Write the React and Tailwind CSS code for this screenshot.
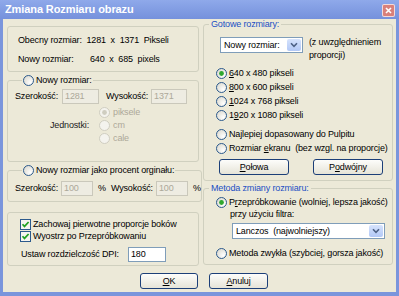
import React from "react";

function Radio({ checked, disabled }) {
  return (
    <svg width="11" height="11" viewBox="0 0 11 11" className="shrink-0">
      <defs>
        <radialGradient id="rg" cx="0.7" cy="0.7" r="0.8">
          <stop offset="0" stopColor="#ffffff" />
          <stop offset="1" stopColor="#dcdad0" />
        </radialGradient>
      </defs>
      <circle
        cx="5.5"
        cy="5.5"
        r="5"
        fill={disabled ? "#f4f3ee" : "url(#rg)"}
        stroke={disabled ? "#cfcdc0" : "#2c5a8c"}
        strokeWidth="1"
      />
      {checked && <circle cx="5.5" cy="5.5" r="2.4" fill={disabled ? "#cfcdc0" : "#2fa82f"} />}
    </svg>
  );
}

function Check() {
  return (
    <svg width="11" height="11" viewBox="0 0 11 11" className="shrink-0">
      <rect x="0.5" y="0.5" width="10" height="10" fill="#f6f5f0" stroke="#2c5a8c" />
      <path d="M2.5 5.2 L4.5 7.4 L8.6 3" fill="none" stroke="#21a121" strokeWidth="1.7" />
    </svg>
  );
}

function Chevron() {
  return (
    <div className="flex h-full w-[14px] items-center justify-center rounded-[2px] bg-gradient-to-b from-[#d6e3fc] to-[#b2c8f6]">
      <svg width="8" height="6" viewBox="0 0 8 6">
        <path d="M1 1.3 L4 4.3 L7 1.3" fill="none" stroke="#4d6185" strokeWidth="1.6" />
      </svg>
    </div>
  );
}

function Btn({ children, w }) {
  return (
    <div
      className={`flex h-[16px] ${w} items-center justify-center rounded-[3px] border border-[#1c3f78] bg-gradient-to-b from-[#fdfdfb] to-[#e6e4d8] text-black`}
    >
      {children}
    </div>
  );
}

function Field({ value, disabled, w }) {
  return (
    <div
      className={`flex h-[15px] ${w} items-center border px-[2px] ${
        disabled ? "border-[#cac8bb] bg-[#eeece2] text-[#aca899]" : "border-[#7f9db9] bg-white text-black"
      }`}
    >
      {value}
    </div>
  );
}

export default function App() {
  return (
    <div
      className="flex h-[296px] w-[399px] flex-col overflow-hidden whitespace-nowrap bg-[#7a95dc] text-[9px] leading-[11px] tracking-[-0.15px] text-black"
      style={{ fontFamily: '"Liberation Sans", Arial, sans-serif' }}
    >
      <div className="flex h-[19px] shrink-0 items-center justify-between bg-gradient-to-b from-[#8fa9ea] to-[#7591dc] pl-[5px] pr-[4px]">
        <span className="text-[11px] font-bold tracking-[-0.1px] text-white">Zmiana Rozmiaru obrazu</span>
        <div className="mt-[1px] flex h-[13px] w-[13px] items-center justify-center rounded-[2px] border border-white/70 bg-[#d9807a]">
          <svg width="7" height="7" viewBox="0 0 7 7">
            <path d="M1 1 L6 6 M6 1 L1 6" stroke="white" strokeWidth="1.6" />
          </svg>
        </div>
      </div>

      <div className="mx-[3px] mb-[4px] flex flex-1 flex-col bg-[#ece9d8] pl-[4px] pr-[3px]">
        <div className="flex h-[246px] shrink-0 gap-[4px]">
          {/* left column */}
          <div className="flex w-[192px] flex-col pt-[7px]">
            <div className="flex h-[46px] shrink-0 flex-col gap-[8px] rounded-[3px] border border-[#d0d0bf] pl-[10px] pt-[8px]">
              <div className="whitespace-pre">Obecny rozmiar:  1281  x  1371  Pikseli</div>
              <div className="whitespace-pre">Nowy rozmiar:       640  x  685  pixels</div>
            </div>

            <fieldset className="mt-[3px] h-[87px] shrink-0 rounded-[3px] border border-[#d0d0bf]">
              <legend className="ml-[14px] flex items-center gap-[2px] px-[1px]">
                <Radio />
                <span>Nowy rozmiar:</span>
              </legend>
              <div className="mt-[3px] flex items-center pl-[7px]">
                <span>Szerokość:</span>
                <span className="ml-[4px]">
                  <Field value="1281" disabled w="w-[37px]" />
                </span>
                <span className="ml-[7px]">Wysokość:</span>
                <span className="ml-[3px]">
                  <Field value="1371" disabled w="w-[36px]" />
                </span>
              </div>
              <div className="mt-[3px] flex items-center">
                <span className="ml-[42px] text-[#222]">Jednostki:</span>
                <div className="ml-[10px] flex flex-col gap-[2px] text-[#aca899]">
                  <div className="flex items-center gap-[3px]">
                    <Radio checked disabled />
                    <span>piksele</span>
                  </div>
                  <div className="flex items-center gap-[3px]">
                    <Radio disabled />
                    <span>cm</span>
                  </div>
                  <div className="flex items-center gap-[3px]">
                    <Radio disabled />
                    <span>cale</span>
                  </div>
                </div>
              </div>
            </fieldset>

            <fieldset className="mt-[3px] h-[37px] shrink-0 rounded-[3px] border border-[#d0d0bf]">
              <legend className="ml-[14px] flex items-center gap-[2px] px-[1px]">
                <Radio />
                <span>Nowy rozmiar jako procent orginału:</span>
              </legend>
              <div className="mt-[5px] flex items-center pl-[7px]">
                <span>Szerokość:</span>
                <span className="ml-[3px]">
                  <Field value="100" disabled w="w-[32px]" />
                </span>
                <span className="ml-[5px]">%</span>
                <span className="ml-[5px]">Wysokość:</span>
                <span className="ml-[3px]">
                  <Field value="100" disabled w="w-[32px]" />
                </span>
                <span className="ml-[5px]">%</span>
              </div>
            </fieldset>

            <div className="mt-[10px] flex h-[54px] shrink-0 flex-col rounded-[3px] border border-[#d0d0bf] pl-[12px] pt-[6px]">
              <div className="flex items-center gap-[2px]">
                <Check />
                <span>Zachowaj pierwotne proporcje boków</span>
              </div>
              <div className="mt-[1px] flex items-center gap-[2px]">
                <Check />
                <span>Wyostrz po Przepróbkowaniu</span>
              </div>
              <div className="mt-[5px] flex items-center pl-[1px]">
                <span>Ustaw rozdzielczość DPI:</span>
                <span className="ml-[9px]">
                  <Field value="180" w="w-[38px]" />
                </span>
              </div>
            </div>
          </div>

          {/* right column */}
          <div className="flex w-[190px] flex-col">
            <fieldset className="h-[162px] shrink-0 rounded-[3px] border border-[#d0d0bf]">
              <legend className="ml-[5px] px-[2px] text-[#1b4fc4]">Gotowe rozmiary:</legend>
              <div className="mt-[7px] flex items-start pl-[16px]">
                <div className="flex h-[16px] w-[83px] items-center justify-between border border-[#7f9db9] bg-white py-[1px] pl-[3px] pr-[1px]">
                  <span>Nowy rozmiar:</span>
                  <Chevron />
                </div>
                <div className="ml-[6px] mt-[-1px] leading-[13px]">
                  (z uwzględnieniem
                  <br />
                  proporcji)
                </div>
              </div>
              <div className="mt-[6px] flex flex-col gap-[3px] pl-[12px]">
                <div className="flex items-center gap-[2px]">
                  <Radio checked />
                  <span>
                    <u>6</u>40 x 480 pikseli
                  </span>
                </div>
                <div className="flex items-center gap-[2px]">
                  <Radio />
                  <span>
                    <u>8</u>00 x 600 pikseli
                  </span>
                </div>
                <div className="flex items-center gap-[2px]">
                  <Radio />
                  <span>
                    <u>1</u>024 x 768 pikseli
                  </span>
                </div>
                <div className="flex items-center gap-[2px]">
                  <Radio />
                  <span>
                    1<u>9</u>20 x 1080 pikseli
                  </span>
                </div>
                <div className="mt-[5px] flex items-center gap-[2px]">
                  <Radio />
                  <span>Najlepiej dopasowany do Pulpitu</span>
                </div>
                <div className="flex items-center gap-[2px]">
                  <Radio />
                  <span className="whitespace-pre">
                    Rozmiar <u>e</u>kranu  (bez wzgl. na proporcje)
                  </span>
                </div>
              </div>
              <div className="mt-[5px] flex items-center pl-[15px]">
                <Btn w="w-[70px]">
                  <span>
                    <u>P</u>ołowa
                  </span>
                </Btn>
                <div className="ml-[24px]">
                  <Btn w="w-[70px]">
                    <span>
                      P<u>o</u>dwójny
                    </span>
                  </Btn>
                </div>
              </div>
            </fieldset>

            <fieldset className="mt-[2px] h-[82px] shrink-0 rounded-[3px] border border-[#d0d0bf]">
              <legend className="ml-[5px] px-[2px] text-[#1b4fc4]">Metoda zmiany rozmiaru:</legend>
              <div className="mt-[3px] flex items-center gap-[2px] pl-[12px]">
                <Radio checked />
                <span>
                  P<u>r</u>zepróbkowanie (wolniej, lepsza jakość)
                </span>
              </div>
              <div className="mt-[1px] pl-[26px]">przy użyciu filtra:</div>
              <div className="ml-[28px] mt-[3px] flex h-[16px] w-[153px] items-center justify-between border border-[#7f9db9] bg-white py-[1px] pl-[3px] pr-[1px]">
                <span className="whitespace-pre">Lanczos  (najwolniejszy)</span>
                <Chevron />
              </div>
              <div className="mt-[9px] flex items-center gap-[2px] pl-[12px]">
                <Radio />
                <span>Metoda zwykła (szybciej, gorsza jakość)</span>
              </div>
            </fieldset>
          </div>
        </div>

        <div className="mt-[8px] flex justify-center gap-[11px] pl-[8px]">
          <Btn w="w-[58px]">
            <span>
              <u>O</u>K
            </span>
          </Btn>
          <Btn w="w-[59px]">
            <span>
              <u>A</u>nuluj
            </span>
          </Btn>
        </div>
      </div>
    </div>
  );
}
